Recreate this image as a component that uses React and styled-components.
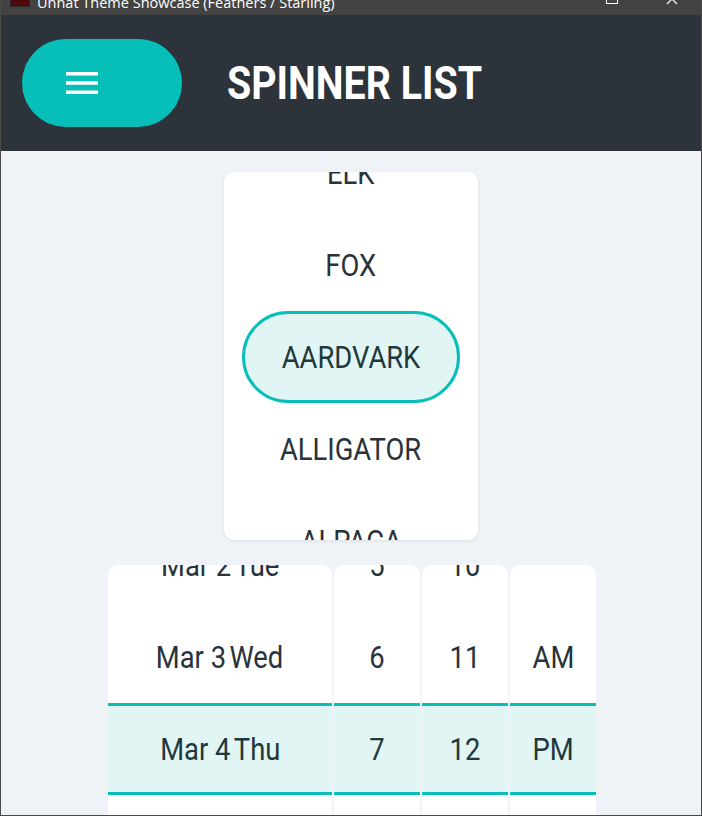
import React from 'react'
import styled, { createGlobalStyle } from 'styled-components'

const animals = ['ELK', 'FOX', 'AARDVARK', 'ALLIGATOR', 'ALPACA']
const dates = [
  { day: 'Mar 2', week: 'Tue' },
  { day: 'Mar 3', week: 'Wed' },
  { day: 'Mar 4', week: 'Thu' },
  { day: 'Mar 5', week: 'Fri' },
]
const hours = ['5', '6', '7', '8']
const minutes = ['10', '11', '12', '13']
const periods = ['', 'AM', 'PM', '']

function Hamburger() {
  return (
    <svg width="32" height="22" viewBox="0 0 32 22">
      <rect x="0" y="0" width="32" height="3.5" fill="#fff" />
      <rect x="0" y="9.25" width="32" height="3.5" fill="#fff" />
      <rect x="0" y="18.5" width="32" height="3.5" fill="#fff" />
    </svg>
  )
}

function App() {
  return (
    <>
      <GlobalStyle />
      <Frame>
        <TitleBar>
          <AppIcon />
          <TitleText>Unnat Theme Showcase (Feathers / Starling)</TitleText>
          <WindowButtons>
            <MaxBox />
            <svg width="12" height="12" viewBox="0 0 12 12" style={{ marginTop: -7 }}>
              <path d="M1 1 L11 11 M11 1 L1 11" stroke="#fff" strokeWidth="1.2" />
            </svg>
          </WindowButtons>
        </TitleBar>

        <Header>
          <MenuButton>
            <Hamburger />
          </MenuButton>
          <Title><Condensed origin="left">SPINNER LIST</Condensed></Title>
        </Header>

        <Main>
          <ListCard>
            <ListScroll>
              {animals.map((a) => (
                <ListItem key={a}>
                  <ItemPill selected={a === 'AARDVARK'}>
                    <Condensed>{a}</Condensed>
                  </ItemPill>
                </ListItem>
              ))}
            </ListScroll>
          </ListCard>

          <DatePicker>
            <Column width={224}>
              <ColumnScroll>
                {dates.map((d, i) => (
                  <DateRow key={d.day} selected={i === 2}>
                    <Condensed>
                      {d.day}<Week>{d.week}</Week>
                    </Condensed>
                  </DateRow>
                ))}
              </ColumnScroll>
            </Column>
            <Column width={86}>
              <ColumnScroll>
                {hours.map((h, i) => (
                  <DateRow key={h} selected={i === 2}>
                    <Condensed>{h}</Condensed>
                  </DateRow>
                ))}
              </ColumnScroll>
            </Column>
            <Column width={86}>
              <ColumnScroll>
                {minutes.map((m, i) => (
                  <DateRow key={m} selected={i === 2}>
                    <Condensed>{m}</Condensed>
                  </DateRow>
                ))}
              </ColumnScroll>
            </Column>
            <Column width={86}>
              <ColumnScroll>
                {periods.map((p, i) => (
                  <DateRow key={i} selected={i === 2}>
                    <Condensed>{p}</Condensed>
                  </DateRow>
                ))}
              </ColumnScroll>
            </Column>
          </DatePicker>
        </Main>
      </Frame>
    </>
  )
}

const GlobalStyle = createGlobalStyle`
  html, body {
    margin: 0;
    padding: 0;
    background: #ffffff;
  }
  body {
    font-family: Roboto, "Liberation Sans", sans-serif;
  }
`

const Frame = styled.div`
  width: 702px;
  height: 816px;
  box-sizing: border-box;
  border: 1px solid #4a4a4a;
  border-top: none;
  display: flex;
  flex-direction: column;
  overflow: hidden;
  background: #eff2f6;
`

const TitleBar = styled.div`
  height: 15px;
  flex-shrink: 0;
  background: #434343;
  display: flex;
  align-items: flex-start;
  overflow: hidden;
  padding-left: 9px;
`

const AppIcon = styled.span`
  width: 18px;
  height: 12px;
  margin-top: -7px;
  background: #4e0909;
  border: 1px solid #2a2a2a;
`

const TitleText = styled.span`
  margin-left: 7px;
  margin-top: -7px;
  font-family: "Open Sans", "DejaVu Sans", sans-serif;
  font-size: 14.5px;
  line-height: 19px;
  color: #ffffff;
  white-space: nowrap;
`

const WindowButtons = styled.div`
  margin-left: auto;
  display: flex;
  gap: 48px;
  padding-right: 23px;
`

const MaxBox = styled.span`
  width: 10px;
  height: 10px;
  margin-top: -8px;
  border: 1px solid #ffffff;
`

const Header = styled.header`
  height: 136px;
  flex-shrink: 0;
  background: #2c333b;
  display: flex;
  align-items: center;
  padding-left: 21px;
`

const MenuButton = styled.button`
  width: 160px;
  height: 88px;
  border: none;
  border-radius: 44px;
  background: #07bfb9;
  display: flex;
  align-items: center;
  padding: 0 0 0 44px;
  cursor: pointer;
`

const Title = styled.h1`
  margin: 0 0 0 45px;
  font-family: Roboto, "Liberation Sans", sans-serif;
  font-weight: 700;
  font-size: 46px;
  line-height: 1;
  color: #ffffff;
`

const Condensed = styled.span`
  display: inline-block;
  white-space: nowrap;
  transform: scaleX(0.855);
  transform-origin: ${(p) => (p.origin === 'left' ? 'left center' : 'center')};
`

const Main = styled.main`
  flex: 1;
  display: flex;
  flex-direction: column;
  align-items: center;
  padding-top: 21px;
  gap: 25px;
  min-height: 0;
`

const ListCard = styled.div`
  width: 254px;
  height: 368px;
  flex-shrink: 0;
  background: #ffffff;
  border-radius: 10px;
  box-shadow: 0 1px 3px rgba(40, 52, 70, 0.1);
  overflow: hidden;
`

const ListScroll = styled.div`
  margin-top: -45px;
`

const ListItem = styled.div`
  height: 92px;
  display: flex;
  padding: 0 18px;
`

const ItemPill = styled.div`
  flex: 1;
  display: flex;
  align-items: center;
  justify-content: center;
  box-sizing: border-box;
  border-radius: 46px;
  border: 3px solid ${(p) => (p.selected ? '#07bfb9' : 'transparent')};
  background: ${(p) => (p.selected ? '#e1f5f4' : 'transparent')};
  font-size: 32px;
  color: ${(p) => (p.selected ? '#21383d' : '#29333b')};
`

const DatePicker = styled.div`
  display: flex;
  gap: 2px;
  flex-shrink: 0;
  margin-left: 2px;
`

const Column = styled.div`
  width: ${(p) => p.width}px;
  height: 300px;
  background: #ffffff;
  border-radius: 10px 10px 0 0;
  overflow: hidden;
`

const ColumnScroll = styled.div`
  margin-top: -46px;
`

const DateRow = styled.div`
  height: 92px;
  box-sizing: border-box;
  display: flex;
  align-items: center;
  justify-content: center;
  font-size: 32px;
  border-top: 3px solid ${(p) => (p.selected ? '#07bfb9' : 'transparent')};
  border-bottom: 3px solid ${(p) => (p.selected ? '#07bfb9' : 'transparent')};
  background: ${(p) => (p.selected ? '#e1f5f4' : 'transparent')};
  color: ${(p) => (p.selected ? '#21383d' : '#29333b')};
`

const Week = styled.span`
  margin-left: 4px;
`

export default App
